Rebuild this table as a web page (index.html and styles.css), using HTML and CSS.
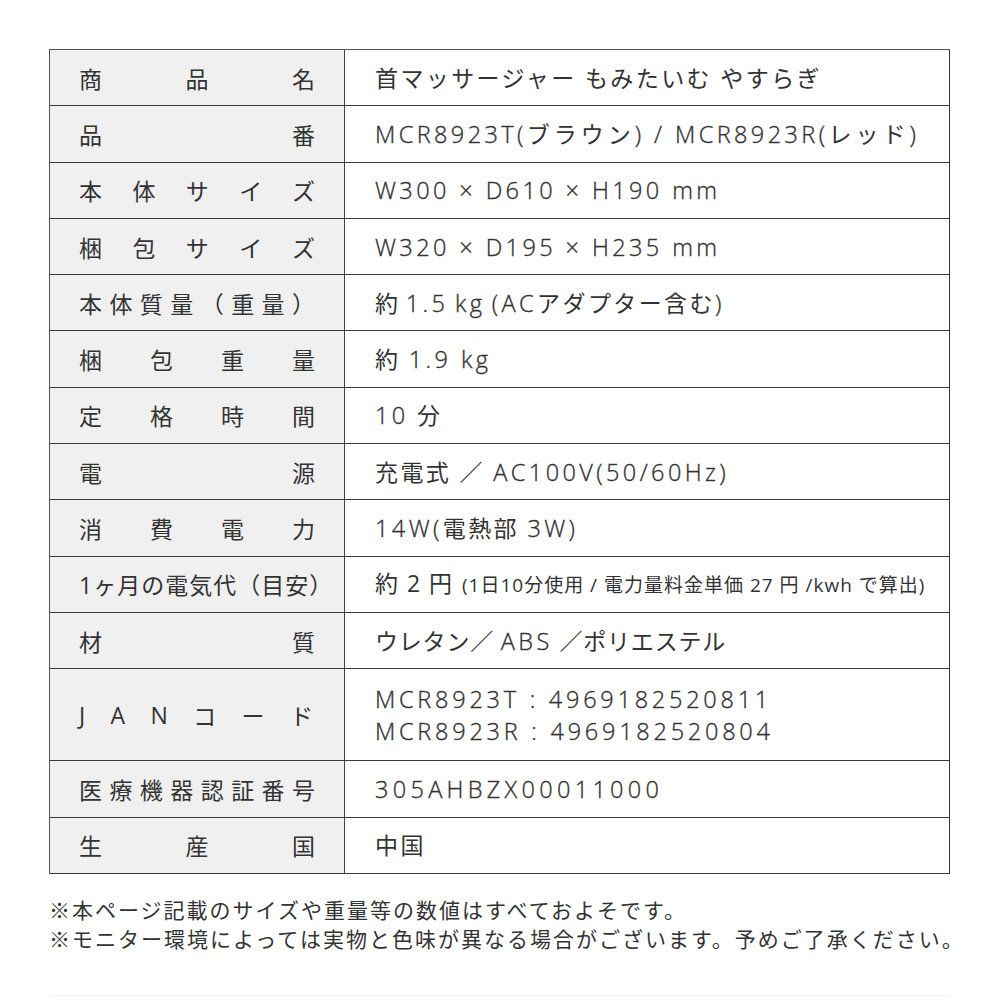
FILE: index.html
```html
<!DOCTYPE html>
<html lang="ja">
<head>
<meta charset="utf-8">
<title>仕様</title>
<link rel="stylesheet" href="styles.css">
</head>
<body>
<div class="page">
  <div class="spec">
    <div class="row"><div class="label">商品名</div><div class="value">首マッサージャー もみたいむ やすらぎ</div></div>
    <div class="row"><div class="label">品番</div><div class="value"><span class="wide"><span class="en">MCR8923T(</span>ブラウン<span class="en">) / MCR8923R(</span>レッド<span class="en">)</span></span></div></div>
    <div class="row"><div class="label">本体サイズ</div><div class="value"><span class="en">W300 × D610 × H190 mm</span></div></div>
    <div class="row"><div class="label">梱包サイズ</div><div class="value"><span class="en">W320 × D195 × H235 mm</span></div></div>
    <div class="row"><div class="label">本体質量（重量）</div><div class="value"><span class="narrow">約 <span class="en">1.5 kg (AC</span>アダプター含む<span class="en">)</span></span></div></div>
    <div class="row"><div class="label">梱包重量</div><div class="value"><span>約 <span class="en">1.9 kg</span></span></div></div>
    <div class="row"><div class="label">定格時間</div><div class="value"><span><span class="en">10</span> 分</span></div></div>
    <div class="row"><div class="label">電源</div><div class="value"><span>充電式 ／ <span class="en">AC100V(50/60Hz)</span></span></div></div>
    <div class="row"><div class="label">消費電力</div><div class="value"><span><span class="en">14W(</span>電熱部 <span class="en">3W)</span></span></div></div>
    <div class="row"><div class="label">1ヶ月の電気代（目安）</div><div class="value"><span><span class="big">約 2 円</span> <span class="small">(1日10分使用 / 電力量料金単価 27 円 /kwh で算出)</span></span></div></div>
    <div class="row"><div class="label">材質</div><div class="value"><span class="tight">ウレタン／ <span class="en">ABS</span> ／ポリエステル</span></div></div>
    <div class="row tall"><div class="label spread"><span>J</span><span>A</span><span>N</span><span>コ</span><span>ー</span><span>ド</span></div><div class="value"><span class="en code">MCR8923T : 4969182520811<br>MCR8923R : 4969182520804</span></div></div>
    <div class="row"><div class="label">医療機器認証番号</div><div class="value"><span class="en code wider">305AHBZX00011000</span></div></div>
    <div class="row"><div class="label">生産国</div><div class="value">中国</div></div>
  </div>
  <div class="notes">
    <p>※本ページ記載のサイズや重量等の数値はすべておよそです。</p>
    <p>※モニター環境によっては実物と色味が異なる場合がございます。予めご了承ください。</p>
  </div>
  <div class="rule"></div>
</div>
</body>
</html>
```
FILE: styles.css
```css
html, body {
  margin: 0;
  padding: 0;
  background: #fff;
}
body {
  font-family: "Open Sans", "Noto Sans CJK JP", sans-serif;
  font-weight: 400;
  color: #333;
}
.page {
  width: 1000px;
  height: 1000px;
  overflow: hidden;
  padding-top: 49px;
  box-sizing: border-box;
}
.spec {
  margin-left: 49px;
  width: 901px;
  border-top: 1px solid #555;
  border-left: 1px solid #555;
  border-right: 1px solid #333;
  box-sizing: border-box;
}
.row {
  display: grid;
  grid-template-columns: 295px 1fr;
  height: 56.3px;
  border-bottom: 1px solid #3a3a3a;
  box-sizing: border-box;
}
.row.tall {
  height: 92px;
}
.label {
  display: grid;
  align-items: center;
  background: #f0f0f0;
  border-right: 1px solid #444;
  padding: 0 28px 0 29px;
  font-size: 23px;
  letter-spacing: 1px;
  text-align: justify;
  text-align-last: justify;
  white-space: nowrap;
}
.label.spread {
  display: flex;
  align-items: center;
  justify-content: space-between;
  padding-right: 30px;
}
.value {
  display: grid;
  align-items: center;
  align-content: center;
  padding-left: 30px;
  font-size: 23px;
  letter-spacing: 2.4px;
  line-height: 32px;
  white-space: nowrap;
}
.value .en {
  font-size: 23.5px;
  font-weight: 300;
  letter-spacing: 3.4px;
  -webkit-text-stroke: 0.35px #333;
}
.value .code {
  letter-spacing: 3.75px;
}
.value .code.wider {
  letter-spacing: 4.3px;
}
.value .wide {
  letter-spacing: 4px;
}
.value .narrow {
  word-spacing: -3px;
}
.value .tight {
  letter-spacing: 0.8px;
}
.value .small {
  font-size: 19px;
  letter-spacing: 1px;
}
.value .big {
  letter-spacing: 1.5px;
}
.notes {
  margin: 21px 0 0 49px;
  font-family: "Noto Sans CJK JP", sans-serif;
  font-size: 21px;
  letter-spacing: 2px;
  line-height: 29px;
}
.notes p {
  margin: 0;
  white-space: nowrap;
}
.rule {
  margin: 42px 0 0 49px;
  width: 901px;
  border-top: 1px solid #f2f2f2;
}
```
